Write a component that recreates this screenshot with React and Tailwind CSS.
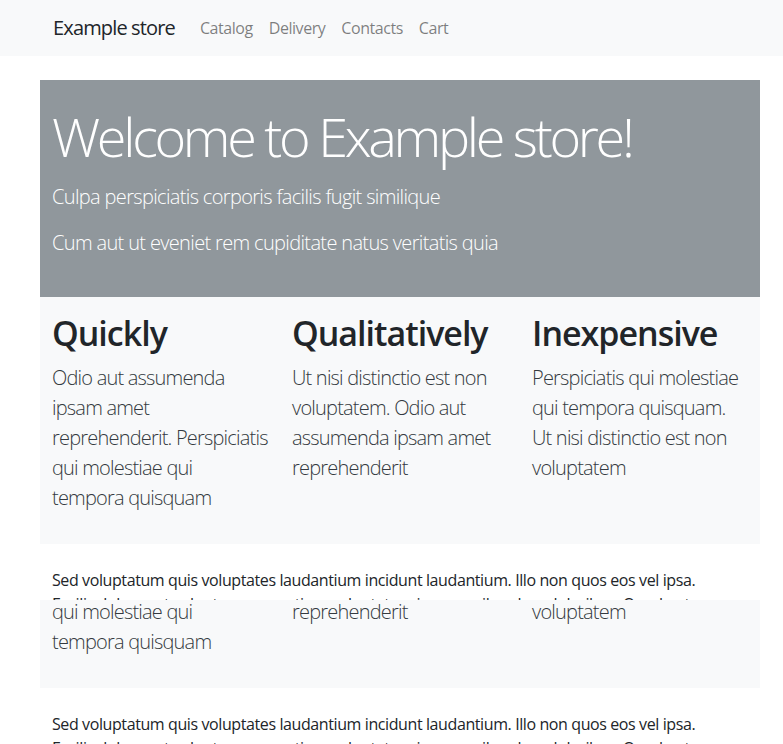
const font = { fontFamily: '"Open Sans", "Noto Sans", sans-serif' };

const features = [
  {
    title: "Quickly",
    text: "Odio aut assumenda ipsam amet reprehenderit. Perspiciatis qui molestiae qui tempora quisquam",
  },
  {
    title: "Qualitatively",
    text: "Ut nisi distinctio est non voluptatem. Odio aut assumenda ipsam amet reprehenderit",
  },
  {
    title: "Inexpensive",
    text: "Perspiciatis qui molestiae qui tempora quisquam. Ut nisi distinctio est non voluptatem",
  },
];

function Page() {
  return (
    <div className="w-[783px] bg-white text-[#212529]">
      {/* Navbar */}
      <nav className="h-[56px] bg-[#f8f9fa] flex items-center pl-[53px]">
        <span className="text-[20px] tracking-[-0.85px] mr-[25px]">Example store</span>
        <div className="flex gap-[16px] text-[16px] tracking-[-0.45px] text-black/50">
          <span>Catalog</span>
          <span>Delivery</span>
          <span>Contacts</span>
          <span>Cart</span>
        </div>
      </nav>

      <main className="ml-[40px] w-[720px] mt-[24px]">
        {/* Jumbotron */}
        <section className="h-[217px] bg-[#90979c] px-[12px] pt-[24px] text-white">
          <h1 className="text-[54px] font-light leading-[1.2] tracking-[-3.3px] mb-[13px]">
            Welcome to Example store!
          </h1>
          <p className="text-[20px] font-light leading-[30px] tracking-[-0.65px] mb-[16px]">
            Culpa perspiciatis corporis facilis fugit similique
          </p>
          <p className="text-[20px] font-light leading-[30px] tracking-[-0.65px]">
            Cum aut ut eveniet rem cupiditate natus veritatis quia
          </p>
        </section>

        {/* Features */}
        <section className="h-[247px] bg-[#f8f9fa] pt-[16px] grid grid-cols-3">
          {features.map((f) => (
            <div key={f.title} className="px-[12px]">
              <h2 className="text-[34px] font-semibold leading-[1.2] tracking-[-1px] mb-[9px]">{f.title}</h2>
              <p className="text-[20px] font-light leading-[30px] tracking-[-0.8px] text-[#343a40]">{f.text}</p>
            </div>
          ))}
        </section>

        <p className="px-[12px] pt-[24px] text-[16px] leading-[24px] tracking-[-0.4px]">
          Sed voluptatum quis voluptates laudantium incidunt laudantium. Illo non quos eos vel ipsa.
          <br />
          Facilis dolores ut voluptas accusantium voluptatem ipsam quibusdam doloribus. Quod aut
          dolorem ipsum labore.
        </p>
      </main>
    </div>
  );
}

export default function App() {
  return (
    <div className="w-[783px] h-[744px] overflow-hidden bg-white" style={font}>
      <div className="h-[600px] overflow-hidden">
        <Page />
      </div>
      <div className="h-[144px] overflow-hidden">
        <div className="-mt-[456px]">
          <Page />
        </div>
      </div>
    </div>
  );
}
